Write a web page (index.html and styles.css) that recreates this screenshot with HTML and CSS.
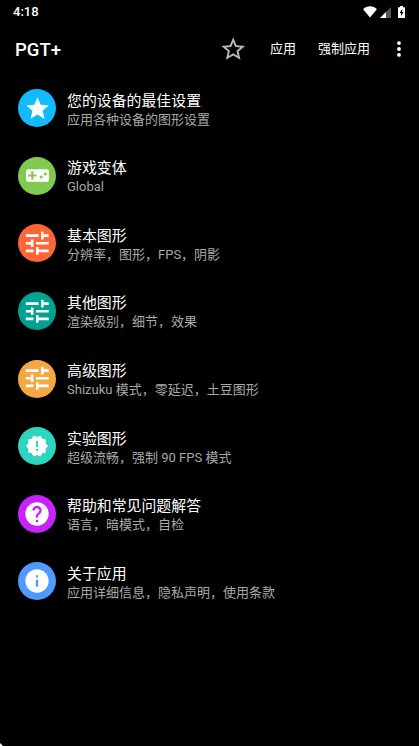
FILE: index.html
```html
<!DOCTYPE html>
<html lang="zh-CN">
<head>
<meta charset="utf-8">
<title>PGT+</title>
<link rel="stylesheet" href="styles.css">
</head>
<body>
<svg class="defs" aria-hidden="true">
  <symbol id="tune" viewBox="0 0 24 24"><path d="M3 17v2h6v-2H3zM3 5v2h10V5H3zm10 16v-2h8v-2h-8v-2h-2v6h2zM7 9v2H3v2h4v2h2V9H7zm14 4v-2H11v2h10zm-6-4h2V7h4V5h-4V3h-2v6z"/></symbol>
</svg>
<div class="screen">
  <div class="status">
    <span class="clock">4:18</span>
    <svg class="wifi" viewBox="0 0 14 12"><path d="M7 11.5.1 3.2C4-.6 10-.6 13.9 3.2z"/></svg>
    <svg class="signal" viewBox="0 0 11 11"><path class="dim" d="M0 11 11 0v11z"/><path d="M0 11 6 5v6z"/></svg>
    <svg class="battery" viewBox="0 0 7 12"><path d="M2 0h3v1.2h2V12H0V1.2h2z"/><path class="bolt" d="M4.2 3 1.6 7h1.5v3L5.5 6H4.2z"/></svg>
  </div>
  <header class="appbar">
    <h1>PGT+</h1>
    <svg class="favorite" viewBox="0 0 24 24"><path d="M22 9.24l-7.19-.62L12 2 9.19 8.63 2 9.24l5.46 4.73L5.82 21 12 17.27 18.18 21l-1.63-7.03L22 9.24zM12 15.4l-3.76 2.27 1-4.28-3.32-2.88 4.38-.38L12 6.1l1.71 4.04 4.38.38-3.32 2.88 1 4.28L12 15.4z"/></svg>
    <span class="action apply">应用</span>
    <span class="action force">强制应用</span>
    <svg class="more" viewBox="0 0 4 16"><circle cx="2" cy="2.1" r="1.9"/><circle cx="2" cy="8" r="1.9"/><circle cx="2" cy="13.9" r="1.9"/></svg>
  </header>
  <main class="list">
    <div class="row">
      <span class="badge sky"><svg class="i-star" viewBox="0 0 24 24"><path d="M12 17.27 18.18 21l-1.64-7.03L22 9.24l-7.19-.61L12 2 9.19 8.63 2 9.24l5.46 4.73L5.82 21z"/></svg></span>
      <div class="text"><h2>您的设备的最佳设置</h2><p>应用各种设备的图形设置</p></div>
    </div>
    <div class="row">
      <span class="badge green"><svg class="i-game" viewBox="0 0 24 24"><path d="M21 6H3c-1.1 0-2 .9-2 2v8c0 1.100.9 2 2 2h18c1.100 0 2-.9 2-2V8c0-1.100-.9-2-2-2zm-10 7H8v3H6v-3H3v-2h3V8h2v3h3v2zm4.500 2c-.83 0-1.500-.67-1.500-1.500s.67-1.500 1.500-1.500 1.500.67 1.500 1.500-.67 1.500-1.500 1.500zm4-3c-.83 0-1.500-.67-1.500-1.500S18.670 9 19.500 9s1.500.67 1.500 1.500-.67 1.500-1.500 1.500z"/></svg></span>
      <div class="text"><h2>游戏变体</h2><p>Global</p></div>
    </div>
    <div class="row">
      <span class="badge orange"><svg class="i-tune"><use href="#tune"/></svg></span>
      <div class="text"><h2>基本图形</h2><p>分辨率，图形，FPS，阴影</p></div>
    </div>
    <div class="row">
      <span class="badge teal"><svg class="i-tune"><use href="#tune"/></svg></span>
      <div class="text"><h2>其他图形</h2><p>渲染级别，细节，效果</p></div>
    </div>
    <div class="row">
      <span class="badge amber"><svg class="i-tune"><use href="#tune"/></svg></span>
      <div class="text"><h2>高级图形</h2><p>Shizuku 模式，零延迟，土豆图形</p></div>
    </div>
    <div class="row">
      <span class="badge mint"><svg class="i-new" viewBox="0 0 24 24"><path d="M23 12l-2.440-2.780.34-3.680-3.610-.82-1.890-3.180L12 3 8.600 1.540 6.710 4.720l-3.610.81.34 3.680L1 12l2.440 2.780-.34 3.690 3.610.82 1.890 3.180L12 21l3.400 1.460 1.890-3.180 3.610-.82-.34-3.680L23 12zm-10 5h-2v-2h2v2zm0-4h-2V7h2v6z"/></svg></span>
      <div class="text"><h2>实验图形</h2><p>超级流畅，强制 90 FPS 模式</p></div>
    </div>
    <div class="row">
      <span class="badge purple"><svg class="i-round" viewBox="0 0 24 24"><path d="M12 2C6.480 2 2 6.480 2 12s4.480 10 10 10 10-4.480 10-10S17.520 2 12 2zm1 17h-2v-2h2v2zm2.070-7.750-.9.920C13.450 12.900 13 13.500 13 15h-2v-.5c0-1.100.45-2.100 1.170-2.830l1.240-1.260c.37-.36.59-.86.59-1.410 0-1.100-.9-2-2-2s-2 .9-2 2H8c0-2.210 1.790-4 4-4s4 1.790 4 4c0 .88-.36 1.680-.93 2.250z"/></svg></span>
      <div class="text"><h2>帮助和常见问题解答</h2><p>语言，暗模式，自检</p></div>
    </div>
    <div class="row">
      <span class="badge blue"><svg class="i-round" viewBox="0 0 24 24"><path d="M12 2C6.480 2 2 6.480 2 12s4.480 10 10 10 10-4.480 10-10S17.520 2 12 2zm1 15h-2v-6h2v6zm0-8h-2V7h2v2z"/></svg></span>
      <div class="text"><h2>关于应用</h2><p>应用详细信息，隐私声明，使用条款</p></div>
    </div>
  </main>
  <i class="corner"></i>
</div>
</body>
</html>
```
FILE: styles.css
```css
* { box-sizing: border-box; margin: 0; padding: 0; }
body {
  background: #000;
  color: #fff;
  font-family: Roboto, "Noto Sans CJK SC", sans-serif;
  overflow: hidden;
}
svg { display: block; flex: none; fill: #fff; }
.defs { position: absolute; width: 0; height: 0; }
.screen { position: relative; height: 746px; }
.status { display: flex; align-items: center; height: 24px; padding: 0 14px 0 13px; }
.clock { flex: 1; font-size: 13px; font-weight: 500; line-height: 24px; }
.wifi { width: 14px; height: 12px; margin-right: 3px; }
.signal { width: 11px; height: 11px; margin-right: 7px; }
.battery { width: 7px; height: 12px; }
.dim { fill: #555; }
.bolt { fill: #000; }
.appbar { display: flex; align-items: center; height: 50px; padding: 0 18.5px 0 15px; }
.appbar h1 { flex: 1; padding-top: 1px; font-size: 18.5px; font-weight: 500; line-height: 24px; }
.favorite { width: 28.4px; height: 28.4px; margin-right: 23px; fill: #b8b8b8; }
.action { font-size: 13px; line-height: 20px; white-space: nowrap; }
.apply { margin-right: 22px; }
.force { margin-right: 26.5px; }
.more { width: 4px; height: 16px; }
.list { display: grid; grid-auto-rows: 67.6px; padding-top: 0.4px; }
.row { display: flex; align-items: center; gap: 11px; padding-left: 18px; }
.badge { display: flex; align-items: center; justify-content: center; flex: none; width: 38px; height: 38px; border-radius: 50%; }
.text { padding-top: 4px; white-space: nowrap; }
.text h2 { font-size: 14.9px; font-weight: 400; line-height: 19px; }
.text p { font-size: 13px; line-height: 18px; color: #a8a8a8; }
.i-star { width: 27px; height: 27px; }
.i-new { width: 24px; height: 24px; }
.i-game { width: 25px; height: 25px; }
.i-tune { width: 30.5px; height: 30.5px; }
.i-round { width: 28px; height: 28px; }
.sky { background: #10bcff; }
.green { background: #7ecb50; }
.orange { background: #ff6535; }
.teal { background: #00a292; }
.amber { background: #f4a843; }
.mint { background: #2dd4bf; }
.purple { background: #c822ff; }
.blue { background: #509aff; }
.corner { position: absolute; left: 0; bottom: 0; width: 3px; height: 3px; background: #fff; clip-path: polygon(0 0, 100% 100%, 0 100%); }
```
